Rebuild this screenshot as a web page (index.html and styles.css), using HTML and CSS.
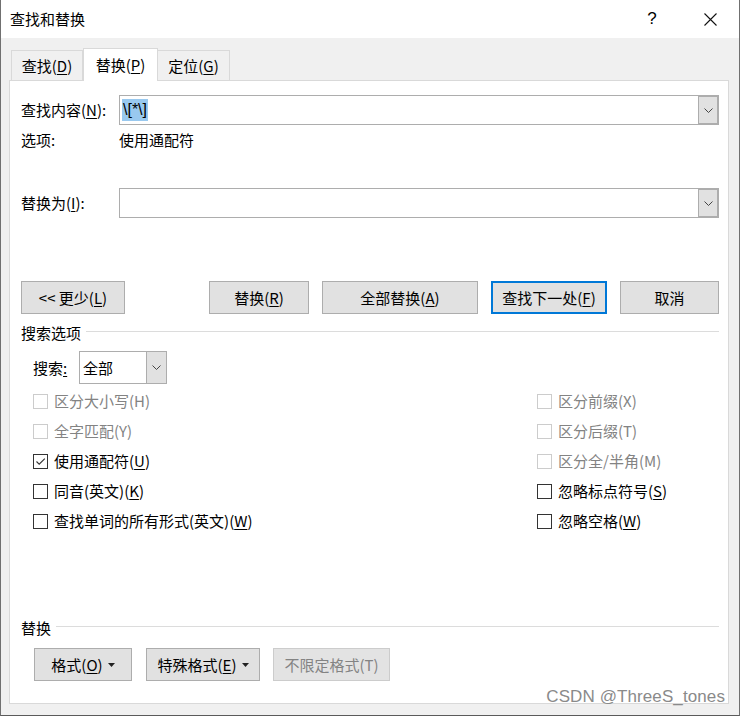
FILE: index.html
```html
<!DOCTYPE html>
<html lang="zh-CN">
<head>
<meta charset="utf-8">
<title>查找和替换</title>
<link rel="stylesheet" href="styles.css">
</head>
<body>
<div class="window">
  <div class="titlebar">
    <span class="title">查找和替换</span>
    <span class="cap-btn help">?</span>
    <span class="cap-btn close"><svg width="13" height="13" viewBox="0 0 13 13"><path d="M0.5 0.5 L12.5 12.5 M12.5 0.5 L0.5 12.5" stroke="#111" stroke-width="1.1" fill="none"/></svg></span>
  </div>
  <div class="body">
    <div class="tabs">
      <div class="tab">查找(<u>D</u>)</div>
      <div class="tab active">替换(<u>P</u>)</div>
      <div class="tab">定位(<u>G</u>)</div>
    </div>
    <div class="panel">
      <div class="field-row">
        <span class="field-label">查找内容(<u>N</u>):</span>
        <div class="combo">
          <div class="combo-text"><span class="sel">\[*\]</span></div>
          <div class="combo-btn"><svg width="9" height="5" viewBox="0 0 9 5"><path d="M0.5 0.5 L4.5 4.5 L8.5 0.5" stroke="#444" stroke-width="1" fill="none"/></svg></div>
        </div>
      </div>
      <div class="opt-row">
        <span class="field-label">选项:</span>
        <span>使用通配符</span>
      </div>
      <div class="field-row replace-row">
        <span class="field-label">替换为(<u>I</u>):</span>
        <div class="combo">
          <div class="combo-text"></div>
          <div class="combo-btn"><svg width="9" height="5" viewBox="0 0 9 5"><path d="M0.5 0.5 L4.5 4.5 L8.5 0.5" stroke="#444" stroke-width="1" fill="none"/></svg></div>
        </div>
      </div>
      <div class="btn-row">
        <button class="btn w-less">&lt;&lt; 更少(<u>L</u>)</button>
        <div class="btn-group">
          <button class="btn w-rep">替换(<u>R</u>)</button>
          <button class="btn w-all">全部替换(<u>A</u>)</button>
          <button class="btn w-next default">查找下一处(<u>F</u>)</button>
          <button class="btn w-cancel">取消</button>
        </div>
      </div>
      <div class="section-head">
        <span class="section-label">搜索选项</span>
        <span class="section-line"></span>
      </div>
      <div class="search-row">
        <span class="search-label">搜索<u>:</u></span>
        <div class="select">
          <div class="select-text">全部</div>
          <div class="select-btn"><svg width="9" height="5" viewBox="0 0 9 5"><path d="M0.5 0.5 L4.5 4.5 L8.5 0.5" stroke="#444" stroke-width="1" fill="none"/></svg></div>
        </div>
      </div>
      <div class="checks">
        <div class="check disabled"><span class="box"></span>区分大小写(H)</div>
        <div class="check disabled"><span class="box"></span>区分前缀(X)</div>
        <div class="check disabled"><span class="box"></span>全字匹配(Y)</div>
        <div class="check disabled"><span class="box"></span>区分后缀(T)</div>
        <div class="check"><span class="box"><svg width="13" height="13" viewBox="0 0 13 13"><path d="M2.5 6.5 L5.2 9.2 L10.8 3.6" stroke="#333" stroke-width="1.1" fill="none"/></svg></span>使用通配符(<u>U</u>)</div>
        <div class="check disabled"><span class="box"></span>区分全/半角(M)</div>
        <div class="check"><span class="box"></span>同音(英文)(<u>K</u>)</div>
        <div class="check"><span class="box"></span>忽略标点符号(<u>S</u>)</div>
        <div class="check"><span class="box"></span>查找单词的所有形式(英文)(<u>W</u>)</div>
        <div class="check"><span class="box"></span>忽略空格(<u>W</u>)</div>
      </div>
      <div class="bottom">
        <div class="section-head">
          <span class="section-label short">替换</span>
          <span class="section-line"></span>
        </div>
        <div class="fmt-row">
          <button class="btn w-fmt">格式(<u>O</u>) <svg class="tri" width="7" height="4" viewBox="0 0 7 4"><polygon points="0,0 7,0 3.5,4" fill="#222"/></svg></button>
          <button class="btn w-special">特殊格式(<u>E</u>) <svg class="tri" width="7" height="4" viewBox="0 0 7 4"><polygon points="0,0 7,0 3.5,4" fill="#222"/></svg></button>
          <button class="btn w-nofmt disabled">不限定格式(T)</button>
        </div>
      </div>
    </div>
  </div>
  <div class="watermark">CSDN @ThreeS_tones</div>
</div>
</body>
</html>
```

FILE: styles.css
```css
* { box-sizing: border-box; }
html, body { margin: 0; padding: 0; background: #f0f0f0; }
body {
  font-family: "Noto Sans CJK SC", "Noto Sans", sans-serif;
  font-size: 15px;
  color: #000;
}
u { text-decoration: underline; text-underline-offset: 2px; text-decoration-thickness: 1px; }

.window {
  position: relative;
  width: 740px;
  height: 716px;
  background: #f0f0f0;
  border-left: 1px solid #707070;
  border-right: 1px solid #707070;
  border-bottom: 1px solid #5a5a5a;
  display: flex;
  flex-direction: column;
  overflow: hidden;
}

.titlebar {
  height: 38px;
  flex: none;
  background: #fff;
  display: flex;
  align-items: center;
}
.title { padding-left: 9px; line-height: 20px; margin-right: auto; }
.cap-btn {
  width: 57px;
  height: 38px;
  display: flex;
  align-items: center;
  justify-content: center;
}
.help {
  font-family: "Liberation Sans", sans-serif;
  font-size: 17px;
  line-height: 20px;
  padding-bottom: 1px;
  padding-right: 3px;
}
.close svg { display: block; }

.body {
  flex: none;
  padding: 10px 10px 0 8px;
}
.tabs {
  display: flex;
  height: 33px;
  margin-left: 2px;
  margin-bottom: -1px;
  position: relative;
  z-index: 1;
}
.tab {
  width: 72px;
  height: 30px;
  margin-top: 2px;
  background: #f0f0f0;
  border: 1px solid #d9d9d9;
  border-bottom: none;
  display: flex;
  align-items: center;
  justify-content: center;
  line-height: 20px;
  padding-top: 1px;
}
.tab + .tab { border-left: none; }
.tab.active {
  width: 75px;
  height: 33px;
  margin-top: 0;
  background: #fff;
  border-left: 1px solid #d9d9d9;
  padding-top: 0;
  padding-bottom: 1px;
}
.tab.active + .tab { border-left: none; }

.panel {
  width: 720px;
  height: 624px;
  background: #fff;
  border: 1px solid #d9d9d9;
  padding: 14px 9px 22px 11px;
  display: flex;
  flex-direction: column;
}

.field-row {
  display: flex;
  align-items: center;
  height: 30px;
}
.field-label { width: 98px; flex: none; line-height: 20px; }
.combo {
  flex: 1;
  height: 30px;
  border: 1px solid #adadad;
  display: flex;
  background: #fff;
}
.combo-text {
  flex: 1;
  padding: 2px 2px;
  display: flex;
  align-items: center;
}
.sel {
  background: #99c9ef;
  line-height: 22px;
  padding: 0 1px;
  font-family: "Liberation Sans", sans-serif;
  font-size: 16px;
}
.combo-btn {
  width: 21px;
  flex: none;
  background: #e1e1e1;
  border: 1px solid #adadad;
  margin: -1px -1px -1px 0;
  border-width: 2px 2px 2px 1px;
  display: flex;
  align-items: center;
  justify-content: center;
}
.combo-btn svg, .select-btn svg { display: block; }

.opt-row {
  display: flex;
  align-items: center;
  height: 18px;
  margin-top: 6px;
  line-height: 18px;
}
.replace-row { margin-top: 39px; }

.btn-row {
  display: flex;
  margin-top: 63px;
  height: 33px;
}
.btn-group { display: flex; gap: 13px; margin-left: auto; }
.btn {
  font: inherit;
  color: #000;
  height: 33px;
  background: #e1e1e1;
  border: 1px solid #adadad;
  padding: 0;
  display: flex;
  align-items: center;
  justify-content: center;
  line-height: 20px;
}
.btn.default { border: 2px solid #0078d7; }
.btn.disabled { color: #838383; border-color: #cccccc; background: #e3e3e3; }
.w-less { width: 104px; }
.w-rep { width: 100px; }
.w-all { width: 156px; }
.w-next { width: 116px; }
.w-cancel { width: 99px; }
.w-fmt { width: 98px; }
.w-special { width: 114px; }
.w-nofmt { width: 117px; }
.tri { margin-left: 5px; margin-top: 1px; }

.section-head {
  display: flex;
  align-items: center;
  height: 20px;
  margin-top: 9px;
}
.section-label { width: 65px; flex: none; line-height: 20px; }
.section-label.short { width: 35px; }
.section-line { flex: 1; height: 1px; background: #dcdcdc; margin-bottom: 3px; }

.search-row {
  display: flex;
  align-items: center;
  margin-top: 8px;
  padding-left: 12px;
  height: 33px;
}
.search-label { width: 46px; flex: none; line-height: 20px; }
.select {
  width: 88px;
  height: 33px;
  border: 1px solid #adadad;
  display: flex;
}
.select-text { flex: 1; padding-left: 3px; display: flex; align-items: center; line-height: 20px; }
.select-btn {
  width: 20px;
  background: #e1e1e1;
  border-left: 1px solid #adadad;
  display: flex;
  align-items: center;
  justify-content: center;
}

.checks {
  display: grid;
  grid-template-columns: 504px 1fr;
  grid-auto-rows: 30px;
  margin-top: 2px;
  padding-left: 12px;
}
.check {
  display: flex;
  align-items: center;
  line-height: 20px;
}
.box {
  width: 15px;
  height: 15px;
  border: 1px solid #333;
  margin-right: 6px;
  flex: none;
  display: flex;
  align-items: center;
  justify-content: center;
  background: #fff;
}
.box svg { display: block; }
.check.disabled { color: #838383; }
.check.disabled .box { border-color: #cccccc; }

.bottom { margin-top: auto; }
.bottom .section-head { margin-top: 0; }
.fmt-row {
  display: flex;
  gap: 14px;
  margin-top: 10px;
  margin-left: 13px;
}
.fmt-row .w-nofmt { margin-left: -1px; }

.watermark {
  position: absolute;
  right: 14px;
  top: 686px;
  font-family: "Liberation Sans", sans-serif;
  font-size: 17px;
  line-height: 22px;
  color: #8a8a8a;
  letter-spacing: 0.1px;
}
```
